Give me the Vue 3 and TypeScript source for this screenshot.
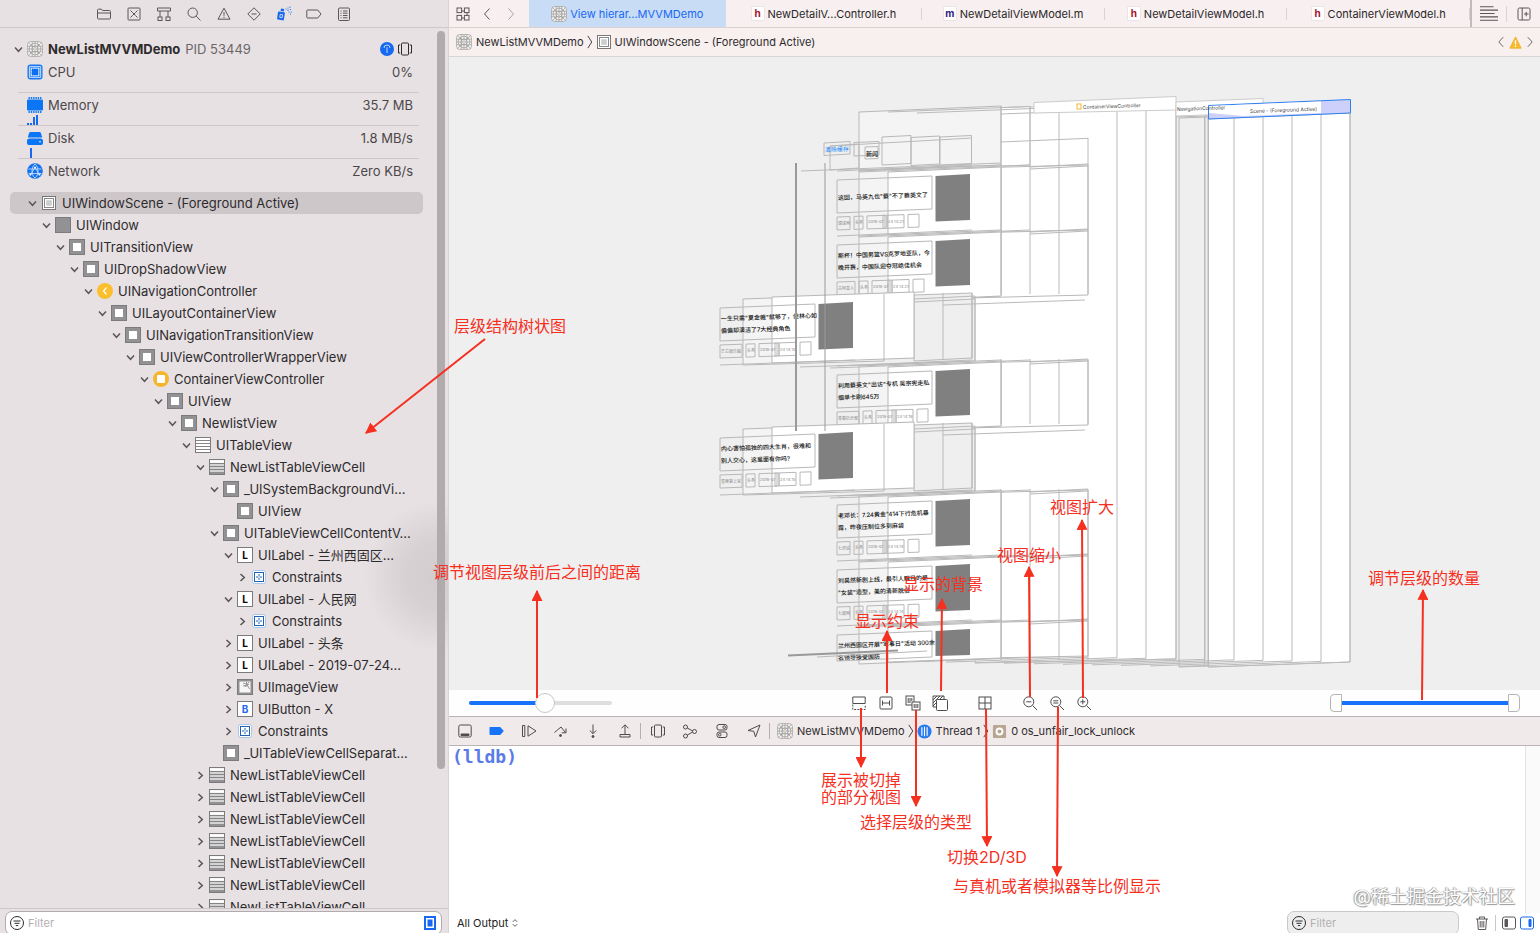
<script setup lang="ts">
import { computed, h, ref } from 'vue'

const icons: Record<string, string> = {
  folder: '<path d="M1.5 12V4.2c0-.6.4-1 1-1h3l1 1.3h7c.6 0 1 .4 1 1V12c0 .6-.4 1-1 1h-11c-.6 0-1-.4-1-1zM1.5 7h13"/>',
  boxx: '<rect x="2" y="2" width="12" height="12" rx=".8"/><path d="M4.5 4.5l2 2m3 3l2 2m0-7l-2 2m-3 3l-2 2M6.5 6.5l3 3m0-3l-3 3"/>',
  hierarchy: '<path d="M1.5 2h13v3h-13zM4 5v6m8-6v6"/><rect x="2" y="11" width="4" height="3.5"/><rect x="10" y="11" width="4" height="3.5"/>',
  search: '<circle cx="6.7" cy="6.7" r="4.7"/><path d="M10.2 10.2l4.3 4.3"/>',
  warning: '<path d="M8 2.2L14 13.2H2z" stroke-linejoin="round"/><path d="M8 6v3.8m0 1v1.2"/>',
  diamond: '<path d="M8 1.8L14.2 8 8 14.2 1.8 8z" stroke-linejoin="round"/><path d="M5.5 8h5"/>',
  spray: '<g fill="currentColor" stroke="none"><path d="M3.2 5.500l5.800 1-1.300 8-5.700-1c-.7-.1-1-.7-.9-1.300l.8-5.500c.1-.8.6-1.300 1.300-1.200z"/><path d="M5 2.500l3.200.500-.400 2.400-3.200-.500z"/><circle cx="10" cy="3" r=".6"/><circle cx="12" cy="2" r=".6"/><circle cx="14" cy="1.200" r=".6"/><circle cx="12" cy="4.200" r=".6"/><circle cx="14.500" cy="3.500" r=".6"/><circle cx="13" cy="6" r=".6"/><circle cx="15.300" cy="6" r=".6"/><circle cx="14.500" cy="8" r=".6"/></g><rect x="4" y="8.500" width="2.400" height="3" stroke="#e7e1e3" stroke-width=".8" transform="rotate(10 5 10)"/>',
  tag: '<path d="M1.500 4h10.300L15 8l-3.200 4H1.500c-.4 0-.7-.3-.7-.7V4.700c0-.4.3-.7.7-.7z" stroke-linejoin="round"/>',
  report: '<rect x="2.500" y="2" width="11" height="12.500" rx="1"/><path d="M4.500 5h1m1.500 0h4.500M4.500 7.200h1m1.500 0h4.500M4.500 9.500h1m1.500 0h4.500M4.500 11.800h1m1.500 0h4.500"/>',
  app: '<g stroke="#9b9a96" stroke-width=".7"><rect x=".6" y=".6" width="14.800" height="14.800" rx="3" fill="#f6f4f3"/><circle cx="8" cy="8" r="5.800"/><circle cx="8" cy="8" r="3"/><circle cx="8" cy="8" r="1.400"/><path d="M5.200.6v14.800M10.800.6v14.800M.6 5.200h14.800M.6 10.800h14.800M1.500 1.500l4 4m5 5l4 4M14.500 1.500l-4 4m-5 5l-4 4M8 .6v4.500m0 6v4.300M.6 8h4.500m6 0h4.300"/></g>',
  info: '<circle cx="8" cy="8" r="7" fill="#1769f0" stroke="none"/><path d="M5 7a3 3 0 0 1 6 0M8 6.200V12" stroke="#b9d5ff"/>',
  frames: '<rect x="4.500" y="2" width="7" height="12" rx="1"/><path d="M3.200 4H1.500v8h1.700m9.600-8h1.700v8h-1.700"/>',
  cpu: '<rect x="1.200" y="1.200" width="13.600" height="13.600" rx="2" stroke="#1579f5" stroke-width="1.400" fill="#d8e7fb"/><rect x="3.200" y="3.200" width="9.600" height="9.600" stroke="#1579f5" stroke-width=".8"/><rect x="5" y="5" width="6" height="6" fill="#0f6ff2" stroke="#0f6ff2" stroke-dasharray="1 .7"/>',
  memory: '<path d="M1.500 1h13M1.500 15h13" stroke="#1579f5" stroke-width="1.800" stroke-dasharray="1.400 .9"/><rect x="0" y="2.500" width="16" height="11" rx="1" fill="#0a76f5" stroke="none"/>',
  disk: '<path d="M3.500 2h9c.7 0 1.200.4 1.400 1L15.200 7.500H.8l1.300-4.500c.2-.6.7-1 1.400-1z" fill="#0a76f5" stroke="none"/><rect x="0" y="8.500" width="16" height="6.500" rx="2.600" fill="#0a76f5" stroke="none"/><circle cx="13" cy="11.800" r=".8" fill="#fff" stroke="none"/>',
  network: '<circle cx="8" cy="8" r="7.800" fill="#1372ee" stroke="none"/><g stroke="#cfe3ff" stroke-width=".8"><path d="M1.500 6h13M1.500 10.500h13M8 1C4 4 4 12 8 15M8 1c4 3 4 11 0 14M3 12.500l5-8 4.500 7.500"/></g><g fill="#fff" stroke="none"><circle cx="8" cy="4.500" r="1"/><circle cx="3.500" cy="11.500" r="1"/><circle cx="12.500" cy="11.500" r="1"/></g>',
  scene: '<rect x="1.500" y="1.500" width="13" height="13" fill="#fff" stroke="#777"/><rect x="3.500" y="3.500" width="9" height="9" fill="#fff" stroke="#888"/><rect x="5.200" y="5.200" width="5.600" height="5.600" fill="#ccc" stroke="none"/>',
  window: '<rect x=".5" y=".5" width="15" height="15" fill="#929193" stroke="#7b7a7c"/>',
  view: '<rect x=".5" y=".5" width="15" height="15" fill="#929193" stroke="#7b7a7c"/><rect x="4" y="4" width="8" height="8" fill="#fff" stroke="none"/>',
  nav: '<circle cx="8" cy="8" r="8" fill="#fcbf2c" stroke="none"/><path d="M9.500 4.500L6.500 8l3 3.500" stroke="#fff" stroke-width="1.200"/>',
  vc: '<circle cx="8" cy="8" r="8" fill="#f5b62c" stroke="none"/><rect x="4" y="4" width="8" height="8" rx="1" fill="#fff" stroke="none"/>',
  table: '<rect x=".5" y=".5" width="15" height="15" fill="#fff" stroke="#7b7a7c"/><path d="M1 3.500h14M1 6.500h14M1 9.500h14M1 12.500h14" stroke="#858486"/>',
  cell: '<rect x=".5" y=".5" width="15" height="15" fill="#d4d3d4" stroke="#7b7a7c"/><path d="M1 2.500h14" stroke="#fff" stroke-width="2.600"/><path d="M1 4.500h14M1 7.500h14M1 10.500h14" stroke="#858486"/><path d="M1 14h14" stroke="#929193" stroke-width="2"/>',
  constraints: '<rect x="1.500" y="1.500" width="13" height="13" rx="2" fill="#fff" stroke="#a9c6ea"/><rect x="3.500" y="3.500" width="9" height="9" stroke="#1f62b5"/><path d="M8 5v2m0 2v2M5 8h2m2 0h2M7.500 8h1" stroke="#1f62b5"/>',
  image: '<rect x=".5" y=".5" width="15" height="15" fill="#929193" stroke="#7b7a7c"/><rect x="2.500" y="2.500" width="11" height="11" fill="#f6f6f6" stroke="none"/><path d="M9.500 2.500v5M6 4l5 1.500M8 8l4-5M6 7l6-1.500M10 6l2.500 4" stroke="#999"/>',
  grid: '<rect x="2" y="2" width="4.600" height="4.600"/><rect x="9.400" y="2" width="4.600" height="4.600"/><rect x="2" y="9.400" width="4.600" height="4.600"/><rect x="9.400" y="9.400" width="4.600" height="4.600"/><path d="M6.600 5h2.800M12 6.600v2.800M6.600 12h2.800"/>',
  left: '<path d="M10.500 2.500L5.500 8l5 5.500"/>',
  right: '<path d="M5.500 2.500l5 5.500-5 5.500"/>',
  lines: '<path d="M0 1.500h12M0 4.500h16M0 7.500h13M0 10.500h16M0 13.500h16"/>',
  addpane: '<rect x="2" y="2" width="12" height="12" rx="1.500"/><path d="M6.200 2v12M8 8h4.500M10.200 5.800v4.500"/>',
  alert: '<path d="M8 2L14 14H2z" fill="#f7b92b" stroke="#f0b030" stroke-linejoin="round"/><path d="M8 5.500v4.500m0 1.300v1.400" stroke="#fff" stroke-width="1.400"/>',
  clipped: '<path d="M1.800 8.500V2h12.400v6.500z"/><path d="M1.800 9.500v5h12.400v-5" stroke-dasharray="2 1.200"/>',
  bounds: '<rect x="2" y="2" width="12" height="12" rx="1"/><path d="M4.500 5.500v5m7-5v5m-7-2.500h7"/>',
  modes: '<rect x="1" y="1" width="8" height="9"/><path d="M3.200 3v5m1.800-5v5m1.800-5v3"/><rect x="7" y="7" width="8" height="8" fill="#fff"/><path d="M9.200 9v4m1.800-4v4m1.800-4v4"/>',
  canvas: '<path d="M4.500 12H1V1h11v3.500M1 5l4-4M1 8l7-7M1 11L11 1"/><rect x="4.500" y="4.500" width="11" height="11" rx="1" fill="#fff"/>',
  quad: '<rect x="2" y="2" width="12" height="12"/><path d="M8 2v12M2 8h12"/>',
  zoomout: '<circle cx="6.800" cy="6.800" r="5"/><path d="M10.500 10.500L15 15M4.300 6.800h5"/>',
  zoomeq: '<circle cx="6.800" cy="6.800" r="5"/><path d="M10.500 10.500L15 15M4.300 5.800h5m-5 2.200h5"/>',
  zoomin: '<circle cx="6.800" cy="6.800" r="5"/><path d="M10.500 10.500L15 15M4.300 6.800h5M6.800 4.300v5"/>',
  hide: '<rect x="1.800" y="2" width="12.400" height="12" rx="1.500"/><path d="M4 11h8v1.500H4z" fill="currentColor"/>',
  breakpoint: '<path d="M1.500 4h9.700L14.800 8l-3.600 4H1.500c-.5 0-1-.4-1-1V5c0-.6.5-1 1-1z" fill="#1873fb" stroke="none"/>',
  resume: '<path d="M1.500 2.500h2.300v11H1.500zM7 2.800L15 8l-8 5.200z" stroke-linejoin="round"/>',
  over: '<path d="M1.500 9.500L8 4l4.500 5.500M13 5.500v4.300H8.700"/><circle cx="7.500" cy="12.500" r="1" fill="currentColor"/>',
  into: '<path d="M8 1.500v9M4.800 7.500L8 10.700l3.200-3.200"/><circle cx="8" cy="13.500" r="1" fill="currentColor"/>',
  out: '<path d="M8 11V2M4.500 5.300L8 1.800l3.500 3.500M3 11.500h10V14H3z"/>',
  graph: '<circle cx="3.500" cy="4" r="2"/><circle cx="12.500" cy="8.500" r="2"/><circle cx="3.500" cy="13" r="2"/><path d="M5.300 5L10.700 8M5.200 12.200L10.600 9"/>',
  toggles: '<rect x="3" y="1.500" width="10" height="5.500" rx="2"/><rect x="3" y="9" width="10" height="5.500" rx="2"/><circle cx="10.200" cy="4.200" r="1.300"/><circle cx="5.800" cy="11.700" r="1.300"/>',
  location: '<path d="M14 2L9.500 14 7.800 8.300 2 7.500z" stroke-linejoin="round"/>',
  crumb: '<path d="M5.500 1l4.500 7-4.500 7"/>',
  thread: '<circle cx="8" cy="8" r="7.500" fill="#2579f2" stroke="none"/><path d="M5.200 3.500v9M8 3v10m2.800-9.500v9" stroke="#fff" stroke-width="1.200"/>',
  frame: '<rect x="1" y="1" width="14" height="14" rx="1" fill="#b9a692" stroke="none"/><circle cx="8" cy="8" r="3.200" stroke="#fff" stroke-width="2"/>',
  filter: '<circle cx="8" cy="8" r="6.500"/><path d="M4.500 6h7M5.500 8.300h5M6.800 10.600h2.400"/>',
  updown: '<path d="M5 6.500L8 3.500l3 3M5 9.500l3 3 3-3"/>',
  trash: '<path d="M2 4h12M5.500 4V2h5v2M3.500 4l.8 10.500h7.400L12.500 4M6.200 6v6.500M8 6v6.500M9.800 6v6.500"/>',
  paneleft: '<rect x="1.500" y="2" width="13" height="12" rx="2"/><path d="M4 4.500h2.500v7H4z" fill="currentColor"/>',
  paneright: '<rect x="1.500" y="2" width="13" height="12" rx="2"/><path d="M10 4.500h2v7h-2z" fill="currentColor"/>',
  doc: '<rect x="3" y="2" width="10" height="12" fill="#fff" stroke="#1868f2" stroke-width="2"/><rect x="5.500" y="4.500" width="5" height="7" fill="#1868f2" stroke="none"/>',
}

const Icon = (p: { name: string; size?: number }) =>
  h('svg', {
    width: p.size ?? 16,
    height: p.size ?? 16,
    viewBox: '0 0 16 16',
    fill: 'none',
    stroke: 'currentColor',
    'stroke-width': 1,
    'aria-hidden': 'true',
    innerHTML: icons[p.name],
  })
Icon.props = ['name', 'size']

const navigators = ['folder', 'boxx', 'hierarchy', 'search', 'warning', 'diamond', 'spray', 'tag', 'report']
const gauges = [
  { name: 'CPU', icon: 'cpu', value: '0%', bars: [] as number[] },
  { name: 'Memory', icon: 'memory', value: '35.7 MB', bars: [2, 2, 8, 10] },
  { name: 'Disk', icon: 'disk', value: '1.8 MB/s', bars: [0, 10] },
  { name: 'Network', icon: 'network', value: 'Zero KB/s', bars: [] as number[] },
]

type Fold = 'open' | 'closed' | 'leaf'
type Node = [level: number, icon: string, text: string, fold: Fold]
const nodes: Node[] = [
  [0, 'scene', 'UIWindowScene - (Foreground Active)', 'open'],
  [1, 'window', 'UIWindow', 'open'],
  [2, 'view', 'UITransitionView', 'open'],
  [3, 'view', 'UIDropShadowView', 'open'],
  [4, 'nav', 'UINavigationController', 'open'],
  [5, 'view', 'UILayoutContainerView', 'open'],
  [6, 'view', 'UINavigationTransitionView', 'open'],
  [7, 'view', 'UIViewControllerWrapperView', 'open'],
  [8, 'vc', 'ContainerViewController', 'open'],
  [9, 'view', 'UIView', 'open'],
  [10, 'view', 'NewlistView', 'open'],
  [11, 'table', 'UITableView', 'open'],
  [12, 'cell', 'NewListTableViewCell', 'open'],
  [13, 'view', '_UISystemBackgroundVi...', 'open'],
  [14, 'view', 'UIView', 'leaf'],
  [13, 'view', 'UITableViewCellContentV...', 'open'],
  [14, 'L', 'UILabel - 兰州西固区...', 'open'],
  [15, 'constraints', 'Constraints', 'closed'],
  [14, 'L', 'UILabel - 人民网', 'open'],
  [15, 'constraints', 'Constraints', 'closed'],
  [14, 'L', 'UILabel - 头条', 'closed'],
  [14, 'L', 'UILabel - 2019-07-24...', 'closed'],
  [14, 'image', 'UIImageView', 'closed'],
  [14, 'B', 'UIButton - X', 'closed'],
  [14, 'constraints', 'Constraints', 'closed'],
  [13, 'view', '_UITableViewCellSeparat...', 'leaf'],
  ...Array.from({ length: 7 }, (): Node => [12, 'cell', 'NewListTableViewCell', 'closed']),
]
const selected = ref(0)

const tabs = [
  { kind: 'h', text: 'NewDetailV...Controller.h', wide: true },
  { kind: 'm', text: 'NewDetailViewModel.m', wide: false },
  { kind: 'h', text: 'NewDetailViewModel.h', wide: false },
  { kind: 'h', text: 'ContainerViewModel.h', wide: false },
]

/* Exploded layer geometry: each plane is 142 wide and steps 29 to the left. */
const rights = [1350, 1321, 1292, 1263, 1234, 1205, 1176, 1146, 1117, 1088, 1059, 1030, 1001]
const topAt = (r: number) => 106 + (r - 1001) * 0.02
const bottomAt = (r: number) => 662 - (1350 - r) * 0.0185
const columns = rights.filter((r) => r > 1100)
const frontColumns = [1088, 1059, 1030, 1001]

/* Frames of the source, section, date and close labels under a headline. */
const metaBoxes = (w: number) =>
  [[0, w], [w + 4, w + 13], [w + 17, w + 35], [w + 33, w + 37], [w + 37, w + 54], [w + 58, w + 69]]
    .map(([a, b]) => `M${a} ${46 - a * 0.035}L${b} ${46 - b * 0.035}V${59 - b * 0.035}L${a} ${59 - a * 0.035}z`)
    .join('')

const stories = [
  { w: 13, lines: ['这回，马英九也"蔡"不了蔡英文了'], meta: ['環球网', '头条', '2019-07', '24 14:21'] },
  { w: 18, lines: ['斯杯！中国男篮VS克罗地亚队，今', '晚开赛，中国队迎夺冠绝佳机会'], meta: ['古阿普人', '头条', '2019-07', '24 14:21'] },
  { w: 22, lines: ['一生只需"夏金薇"就够了，但林心如', '偏偏却演活了7大经典角色'], meta: ['芒芯娱乐圈', '头条', '2019-07', '24 14:15'] },
  { w: 22, lines: ['利用蔡英文"出访"专机 吴宗宪走私', '烟单卡刷645万'], meta: ['青春历史观', '头条', '2019-07', '24 14:19'] },
  { w: 22, lines: ['内心害怕孤独的四大生肖，很难和', '别人交心，这里面有你吗?'], meta: ['星座第上官', '头条', '2019-07', '24 14:15'] },
  { w: 13, lines: ['老邓长：7.24黄金"414下行危机暴', '露，昨夜压制位多到麻袋'], meta: ['七邓说', '头条', '2019-07', '24 14:14'] },
  { w: 13, lines: ['刘昊然新剧上线，最引人瞩目的是', '"女装"造型，美的清新脱俗'], meta: ['七娱网', '头条', '2019-07', '24 14:14'] },
  { w: 13, lines: ['兰州西固区开展"军事日"活动 300余', '名领导接受国防'], meta: [] as string[] },
].map((s, i) => {
  const shifted = i === 2 || i === 4
  return { ...s, shifted, last: i === 7, x: shifted ? 720 : 837, y: 171 + i * 65 - (shifted ? 2 : 0) }
})

const arrows = [
  [485, 339, 366, 433], [537, 698, 537, 591], [887, 693, 887, 631], [941, 691, 942, 599],
  [1030, 697, 1029, 567], [1083, 698, 1082, 520], [1422, 700, 1423, 590], [861, 708, 861, 767],
  [916, 710, 916, 806], [986, 709, 987, 846], [1058, 707, 1057, 876],
]
const notes: [number, number, string][] = [
  [454, 332, '层级结构树状图'], [433, 578, '调节视图层级前后之间的距离'], [855, 627, '显示约束'],
  [903, 590, '显示的背景'], [997, 561, '视图缩小'], [1050, 513, '视图扩大'], [1368, 584, '调节层级的数量'],
  [821, 786, '展示被切掉'], [821, 803, '的部分视图'], [860, 828, '选择层级的类型'],
  [947, 863, '切换2D/3D'], [953, 892, '与真机或者模拟器等比例显示'],
]

const spacing = ref(54)
const low = ref(0)
const high = ref(100)
const spacingFill = computed(() => ({ width: `${spacing.value}%` }))
const rangeFill = computed(() => ({ left: `${low.value}%`, right: `${100 - high.value}%` }))
const treeFilter = ref('')
const consoleFilter = ref('')
const output = ref('All Output')

const canvasTools = ['clipped', 'bounds', 'modes', 'canvas', 'quad', 'zoomout', 'zoomeq', 'zoomin']
const debugTools = ['hide', 'breakpoint', 'resume', 'over', 'into', 'out']
const debugExtras = ['frames', 'graph', 'toggles', 'location']
</script>

<template>
  <div class="workspace">
    <aside class="sidebar">
      <nav class="navigators" aria-label="Navigators">
        <button v-for="n in navigators" :key="n" :class="{ on: n === 'spray' }" :aria-label="n"><Icon :name="n" /></button>
      </nav>
      <div class="sidebar-body">
        <section class="gauges">
          <header class="process">
            <svg class="caret" viewBox="0 0 11 11"><path d="M2 3.500l3.500 3.800L9 3.500" /></svg>
            <Icon name="app" />
            <strong>NewListMVVMDemo</strong>
            <span>PID 53449</span>
            <button class="push" aria-label="Process info"><Icon name="info" /></button>
            <button aria-label="View hierarchy"><Icon name="frames" /></button>
          </header>
          <div v-for="g in gauges" :key="g.name" class="gauge">
            <div class="gauge-line">
              <Icon :name="g.icon" />
              <span>{{ g.name }}</span>
              <span class="value">{{ g.value }}</span>
            </div>
            <div class="spark"><i v-for="(b, i) in g.bars" :key="i" :style="{ height: b + 'px' }"></i></div>
          </div>
        </section>
        <ul class="tree" role="tree">
          <li
            v-for="(n, i) in nodes"
            :key="i"
            role="treeitem"
            :class="{ selected: selected === i }"
            :style="{ paddingLeft: 17 + n[0] * 14 + 'px' }"
            @click="selected = i"
          >
            <button class="fold" :class="n[3]" aria-label="Toggle">
              <svg class="caret" viewBox="0 0 11 11"><path d="M2 3.500l3.500 3.800L9 3.500" /></svg>
            </button>
            <span v-if="n[1] === 'L' || n[1] === 'B'" class="letter" :class="{ blue: n[1] === 'B' }">{{ n[1] }}</span>
            <Icon v-else :name="n[1]" />
            <span class="name">{{ n[2] }}</span>
          </li>
        </ul>
        <div class="scroller"></div>
      </div>
      <footer class="sidebar-filter">
        <label class="field">
          <Icon name="filter" />
          <input v-model="treeFilter" type="text" placeholder="Filter" aria-label="Filter hierarchy" />
          <Icon name="doc" />
        </label>
      </footer>
    </aside>

    <main class="editor">
      <div class="tabbar">
        <div class="history">
          <button aria-label="Related items"><Icon name="grid" /></button>
          <button aria-label="Back"><Icon name="left" /></button>
          <button class="dim" aria-label="Forward"><Icon name="right" /></button>
        </div>
        <button class="tab wide active"><Icon name="app" /><span>View hierar...MVVMDemo</span></button>
        <button v-for="t in tabs" :key="t.text" class="tab" :class="{ wide: t.wide }">
          <span class="file" :class="t.kind">{{ t.kind }}</span><span>{{ t.text }}</span>
        </button>
        <div class="tab-actions">
          <button aria-label="Editor options"><Icon name="lines" :size="18" /></button>
          <button class="split" aria-label="Add editor"><Icon name="addpane" /></button>
        </div>
      </div>

      <div class="pathbar">
        <Icon name="app" />
        <span>NewListMVVMDemo</span>
        <Icon name="crumb" :size="14" />
        <Icon name="scene" />
        <span>UIWindowScene - (Foreground Active)</span>
        <div class="issues">
          <button aria-label="Previous issue"><Icon name="left" :size="14" /></button>
          <Icon name="alert" :size="15" />
          <button aria-label="Next issue"><Icon name="right" :size="14" /></button>
        </div>
      </div>

      <section class="stage">
        <svg class="scene">
          <g transform="translate(-449 -57)">
            <g class="plane">
              <path d="M1208 119L1350 113V662L1208 667z" />
              <path class="grey" d="M1179 118L1208 117V666L1179 667z" />
              <path d="M975 109L1176 102V659L975 663z" />
              <path d="M888 112L1030 106.500V165L888 170z" />
              <path class="back" d="M859 112L1001 106V165L859 171z" />
            </g>
            <path class="edge" d="M917 113l142-5.500M888 112l142-5.500M1001 142l87-3.700M1001 114l145-5.500M1176 115l58-2M1176 117l58-2M1204.500 116v550M1208.500 106v560" />
            <path v-for="r in columns" :key="'c' + r" class="edge" :d="`M${r} ${topAt(r)}V${bottomAt(r)}`" />
            <path v-for="r in rights" :key="'b' + r" class="edge" :d="`M${r - 142} ${bottomAt(r) + 5}L${r} ${bottomAt(r)}`" />
            <path class="edge" d="M1001 106v59M1030 106v59M1059 107v58M1088 138v27" />

            <path class="label-plane" d="M1034 102.500L1176 96.500V110L1034 113z" />
            <path class="label-plane" d="M1176 102L1263 98.500V113L1176 116z" />
            <path class="blue-band" d="M1208.500 105.500L1350.500 99.500V113L1208.500 119z" />
            <path class="label-fill" d="M1209 106L1321 101.500V113L1244 116L1209 113z" />
            <rect class="badge" x="1077" y="104" width="4" height="5" />
            <g class="tiny">
              <text x="1083" y="109" transform="rotate(-2 1083 109)">ContainerViewController</text>
              <text x="1177" y="111" transform="rotate(-2 1177 111)">NavigationController</text>
              <text x="1250" y="113" transform="rotate(-2 1250 113)">Scene - (Foreground Active)</text>
            </g>

            <g v-for="(s, i) in stories" :key="i" :transform="`translate(${s.x} ${s.y})`">
              <template v-if="s.shifted">
                <path class="grey" d="M194 -4L252 -6V59L194 62z" />
                <path class="back" d="M23 0L164 -5V62L23 66z" />
                <path class="white" d="M52 -2L194 -7V59L52 64z" />
                <path class="edge" d="M223 -6v67M252 -6v66M255 -3v67M164 -5v66M194 0l61-3M194 3l61-3M223 6l142-5M0 66l135-5M80 68l175-6M110 69l175-6" />
              </template>
              <template v-else>
                <path class="white" :d="`M51 -1L251 -6V${s.last ? 30 : 59}L51 ${s.last ? 34 : 64}z`" />
                <path class="back" :d="`M22 0L164 -6V${s.last ? 32 : 60}L22 ${s.last ? 38 : 66}z`" />
                <path class="white" :d="`M51 1L164 -4V${s.last ? 32 : 60}L51 ${s.last ? 36 : 65}z`" />
                <path v-for="c in frontColumns" :key="c" class="edge" :d="`M${c - 837} -7V${s.last ? 34 : 58}`" />
                <path class="edge" d="M0 0l135-6M22 1l171-7M193 -4l58-3M193 -2l58-3" />
              </template>
              <path class="box" :d="`M0 9L95 5V${s.last ? 31 : 38}L0 ${s.last ? 35 : 42}z`" />
              <path class="photo" :d="`M98.500 5L133 3V${s.last ? 29 : 49}L98.500 ${s.last ? 30 : 50.500}z`" />
              <text
                v-for="(line, k) in s.lines"
                :key="k"
                class="headline"
                x="1"
                :y="(s.lines.length === 1 ? 29 : 22) + k * 12"
                :transform="`rotate(-2 1 ${(s.lines.length === 1 ? 29 : 22) + k * 12})`"
              >{{ line }}</text>
              <template v-if="s.meta.length">
                <path class="box" :d="metaBoxes(s.w)" />
                <g class="meta">
                  <text x="1" y="54">{{ s.meta[0] }}</text>
                  <text :x="s.w + 5" y="53">{{ s.meta[1] }}</text>
                  <text :x="s.w + 18" y="52">{{ s.meta[2] }}</text>
                  <text :x="s.w + 38" y="52">{{ s.meta[3] }}</text>
                </g>
              </template>
            </g>

            <path class="edge" d="M830 146l29-2v24l-29 2zM830 146l142-8M859 170l113-4" />
            <path class="box" d="M824 143l26-1.500v12.500l-26 1.500zM854 142.500l25-1v13.500l-25 1zM882 137l29-1.500v28l-29 1.500zM911 137.500l28.500-1.500v28l-28.500 1.500zM940 137l31.500-1.500v28L940 165zM865 147l13-.500v12l-13 .500z" />
            <text class="clear" x="825" y="152" transform="rotate(-2 825 152)">清除缓存</text>
            <text class="headline" x="866" y="156">新闻</text>
            <path class="rail" d="M796 163v268" />
            <path class="rail thin" d="M825 163v268" />
            <path class="edge" d="M801 171l200-8" />
            <path class="rail" d="M788 655.500l110-5" />
            <path class="edge" d="M817 657l110-6" />
          </g>
        </svg>
      </section>

      <div class="canvas-bar">
        <div class="slider">
          <div class="track"><div class="fill" :style="spacingFill"></div></div>
          <input v-model.number="spacing" type="range" min="0" max="100" aria-label="Layer spacing" />
        </div>
        <div class="tools">
          <button v-for="t in canvasTools" :key="t" :class="t" :aria-label="t"><Icon :name="t" /></button>
        </div>
        <div class="slider double">
          <div class="track"><div class="fill" :style="rangeFill"></div></div>
          <input v-model.number="low" type="range" min="0" max="100" aria-label="First visible layer" />
          <input v-model.number="high" class="upper" type="range" min="0" max="100" aria-label="Last visible layer" />
        </div>
      </div>

      <div class="debugbar">
        <div class="debug-group">
          <button v-for="t in debugTools" :key="t" :aria-label="t"><Icon :name="t" /></button>
        </div>
        <div class="debug-group ruled">
          <button v-for="t in debugExtras" :key="t" :aria-label="t"><Icon :name="t" /></button>
        </div>
        <div class="crumbs">
          <Icon name="app" />
          <span>NewListMVVMDemo</span>
          <Icon name="crumb" :size="14" />
          <Icon name="thread" :size="15" />
          <span>Thread 1</span>
          <Icon name="crumb" :size="14" />
          <Icon name="frame" :size="15" />
          <span>0 os_unfair_lock_unlock</span>
        </div>
      </div>

      <section class="console">
        <div class="log"><pre>(lldb)</pre></div>
        <div class="gutter"></div>
      </section>
      <footer class="console-bar">
        <label class="output">
          <select v-model="output" aria-label="Output"><option>All Output</option></select>
          <Icon name="updown" :size="12" />
        </label>
        <label class="field small">
          <Icon name="filter" />
          <input v-model="consoleFilter" type="text" placeholder="Filter" aria-label="Filter console" />
        </label>
        <button class="trash" aria-label="Clear console"><Icon name="trash" /></button>
        <div class="panes">
          <button aria-label="Variables view"><Icon name="paneleft" /></button>
          <button class="on" aria-label="Console view"><Icon name="paneright" /></button>
        </div>
      </footer>
    </main>

    <div class="watermark">@稀土掘金技术社区</div>
    <svg class="notes">
      <defs>
        <marker id="head" viewBox="0 0 10 10" refX="9" refY="5" markerWidth="11" markerHeight="11" markerUnits="userSpaceOnUse" orient="auto">
          <path d="M0 0L10 5L0 10z" />
        </marker>
      </defs>
      <line v-for="(a, i) in arrows" :key="i" :x1="a[0]" :y1="a[1]" :x2="a[2]" :y2="a[3]" marker-end="url(#head)" />
      <text v-for="n in notes" :key="n[2]" :x="n[0]" :y="n[1]">{{ n[2] }}</text>
    </svg>
  </div>
</template>

<style>
body {
  margin: 0;
  overflow: hidden;
}
</style>

<style scoped>
.workspace {
  position: relative;
  display: flex;
  height: 100vh;
  overflow: hidden;
  font-family: Inter, "Noto Sans CJK SC", sans-serif;
  font-size: 13px;
  color: #2e2b2d;
  background: #fff;
}
button {
  display: inline-flex;
  align-items: center;
  justify-content: center;
  padding: 0;
  border: 0;
  background: none;
  color: #5b5658;
  font: inherit;
}
svg {
  flex: none;
  display: block;
}
.sidebar {
  flex: 0 0 448px;
  display: flex;
  flex-direction: column;
  min-height: 0;
  border-right: 1px solid #d9d3d5;
  background: #e7e1e3;
}
.navigators {
  display: flex;
  flex: 0 0 27px;
  justify-content: center;
  gap: 14px;
  border-bottom: 1px solid #cdc7c9;
}
.navigators .on {
  color: #1769f0;
}
.sidebar-body {
  position: relative;
  flex: 1 1 0;
  min-height: 0;
  overflow: hidden;
  padding: 10px 25px 0 10px;
  background: radial-gradient(circle at 440px 548px, rgba(70, 66, 68, 0.13), rgba(70, 66, 68, 0.1) 35px, rgba(70, 66, 68, 0) 76px);
}
.scroller {
  position: absolute;
  top: 3px;
  right: 3px;
  bottom: 139px;
  width: 8px;
  border-radius: 4px;
  background: #b1abad;
}
.gauges {
  padding: 0 4px 0 8px;
}
.caret {
  width: 11px;
  height: 11px;
  fill: none;
  stroke: #5b5658;
  stroke-width: 1.500;
}
.process {
  display: flex;
  align-items: center;
  height: 22px;
  margin-left: -5px;
  gap: 5px;
  padding-right: 6px;
}
.process .caret {
  margin-right: -2px;
}
.process span {
  color: #6b6668;
}
.process button {
  color: #2e2b2d;
}
.process .push {
  margin-left: auto;
  margin-right: -3px;
}
.gauge {
  height: 32px;
  border-bottom: 1px solid #cdc7c9;
}
.gauge:last-child {
  border-bottom-color: transparent;
}
.gauge-line {
  display: flex;
  align-items: center;
  height: 23px;
  gap: 5px;
  padding: 0 6px 0 9px;
  color: #4c484a;
}
.value {
  margin-left: auto;
}
.spark {
  display: flex;
  align-items: flex-end;
  gap: 1px;
  height: 9px;
  padding-left: 9px;
}
.spark i {
  width: 2px;
  background: #1868f2;
}
.tree {
  margin: 0;
  padding: 0;
  list-style: none;
}
.tree li {
  display: flex;
  align-items: center;
  height: 22px;
  gap: 5px;
  border-radius: 5px;
  line-height: 16px;
  white-space: nowrap;
}
.name {
  height: 16px;
}
.tree .selected {
  background: #cdc7c9;
}
.fold {
  width: 11px;
  margin-right: -2px;
}
.fold.closed .caret {
  transform: rotate(-90deg);
}
.fold.leaf {
  visibility: hidden;
}
.letter {
  box-sizing: border-box;
  width: 16px;
  height: 16px;
  border: 1px solid #7b7a7c;
  background: #fff;
  color: #000;
  font-size: 10px;
  font-weight: 700;
  line-height: 14px;
  text-align: center;
}
.letter.blue {
  color: #2469f0;
}
.sidebar-filter {
  display: flex;
  flex: 0 0 24px;
  align-items: flex-start;
  min-height: 0;
  padding: 0 6px 0 5px;
  border-top: 1px solid #cdc7c9;
}
.field {
  box-sizing: border-box;
  display: flex;
  flex: 1;
  align-items: center;
  min-width: 0;
  height: 24px;
  margin-top: 2px;
  padding: 0 3px;
  gap: 3px;
  border: 1px solid #b1abad;
  border-radius: 7px;
  background: #fff;
  font-size: 11px;
}
.field input {
  flex: 1;
  min-width: 0;
  padding: 0;
  border: 0;
  outline: 0;
  background: none;
  font: inherit;
}
.field input::placeholder {
  color: #b3b0b1;
  opacity: 1;
}
.editor {
  display: flex;
  flex: 1 1 0;
  flex-direction: column;
  min-width: 0;
}
.tabbar {
  display: flex;
  flex: 0 0 27px;
  border-bottom: 1px solid #d9d2d3;
  background: #f8eff0;
  font-size: 11px;
}
.history {
  display: flex;
  flex: 0 0 80px;
  align-items: center;
  gap: 8px;
  box-sizing: border-box;
  padding-left: 6px;
}
.dim {
  opacity: 0.5;
}
.tab {
  position: relative;
  flex: 182 1 0;
  gap: 4px;
  min-width: 0;
  color: #2a2728;
  white-space: nowrap;
}
.tab.wide {
  flex-grow: 196;
}
.tab.active {
  gap: 3px;
  background: #c8dcf6;
  color: #1768f2;
}
.tab:not(.active)::after {
  content: "";
  position: absolute;
  top: 8px;
  right: 0;
  width: 1px;
  height: 12px;
  background: #dcd3d5;
}
.file {
  width: 12px;
  height: 13px;
  background: #fff;
  box-shadow: 0 0 1px #aaa;
  color: #a5112a;
  font-size: 10px;
  font-weight: 700;
  line-height: 13px;
}
.file.m {
  color: #2e2080;
}
.tab-actions {
  display: flex;
  align-items: center;
  justify-content: space-between;
  flex: 0 0 70px;
  box-sizing: border-box;
  padding: 0 8px;
  border-left: 2px solid #c2bbbc;
}
.split {
  padding-left: 9px;
  border-left: 1px solid #dcd3d5;
}
.pathbar {
  display: flex;
  flex: 0 0 28px;
  align-items: center;
  gap: 4px;
  padding: 0 3px 0 7px;
  border-bottom: 1px solid #d9d4d5;
  background: #f8efef;
  font-size: 11px;
}
.pathbar > svg:nth-of-type(2),
.crumbs > svg:nth-of-type(2),
.crumbs > svg:nth-of-type(4) {
  margin: 0 -5px;
}
.pathbar > svg:nth-of-type(3) {
  margin-right: -1px;
}
.issues {
  display: flex;
  align-items: center;
  margin-left: auto;
}
.stage {
  position: relative;
  flex: 1 1 0;
  min-height: 0;
  overflow: hidden;
  background: #efefef;
}
.scene {
  position: absolute;
  inset: 0;
  width: 100%;
  height: 100%;
}
.plane path {
  fill: #fff;
  stroke: #c0c0c0;
}
.plane .grey,
.grey {
  fill: #efefef;
  stroke: #b8b8b8;
}
.white {
  fill: #fff;
  stroke: #b8b8b8;
}
.plane .back,
.back {
  fill: #f4f4f4;
  stroke: #b8b8b8;
}
.edge {
  fill: none;
  stroke: #bababa;
}
.label-plane,
.label-fill {
  fill: #fff;
  stroke: #ccc;
}
.label-fill {
  stroke: none;
}
.blue-band {
  fill: #ccd0fb;
  stroke: #2c80ee;
}
.badge {
  fill: none;
  stroke: #f5b62c;
}
.tiny {
  fill: #444;
  font-size: 5px;
}
.box {
  fill: none;
  stroke: #b8b8b8;
}
.photo {
  fill: #808080;
}
.headline {
  fill: #111;
  font-size: 6px;
  font-weight: 500;
}
.meta {
  fill: #888;
  font-size: 4px;
}
.clear {
  fill: #1687f5;
  font-size: 6px;
}
.rail {
  fill: none;
  stroke: #999;
  stroke-width: 2;
}
.rail.thin {
  stroke-width: 1;
}
.canvas-bar {
  display: flex;
  flex: 0 0 27px;
  align-items: center;
  justify-content: space-between;
  box-sizing: border-box;
  padding: 0 20px;
  border-bottom: 1px solid #b9b3b5;
  background: #fefefe;
}
.slider {
  position: relative;
  display: flex;
  align-items: center;
  width: 143px;
  height: 22px;
}
.slider.double {
  width: 190px;
}
.track {
  position: relative;
  flex: 1;
  height: 4px;
  border-radius: 2px;
  background: #dedede;
}
.double .track {
  margin: 0 10px;
}
.fill {
  height: 4px;
  border-radius: 2px;
  background: #1873fb;
}
.double .fill {
  position: absolute;
}
.slider input {
  position: absolute;
  inset: 0;
  width: 100%;
  margin: 0;
  appearance: none;
  background: none;
  pointer-events: none;
}
.slider input::-webkit-slider-thumb {
  appearance: none;
  box-sizing: border-box;
  width: 20px;
  height: 20px;
  border: 1px solid #c6c6c6;
  border-radius: 50%;
  background: #fff;
  pointer-events: auto;
}
.double input::-webkit-slider-thumb {
  width: 12px;
  height: 18px;
  border-color: #b5b5b5;
  border-radius: 4px 0 0 4px;
}
.double .upper::-webkit-slider-thumb {
  border-radius: 0 4px 4px 0;
}
.tools {
  display: flex;
  gap: 11px;
}
.tools .quad,
.tools .zoomout {
  margin-left: 18px;
}
.tools button,
.debugbar button {
  color: #4f4c4d;
}
.debugbar {
  display: flex;
  flex: 0 0 28px;
  align-items: center;
  border-bottom: 1px solid #b9b3b5;
  background: #f0eaeb;
  font-size: 11px;
}
.debug-group {
  display: flex;
  gap: 16px;
  padding: 0 7px 0 8px;
}
.ruled {
  padding-left: 9px;
  border: 1px solid #b5afb1;
  border-width: 0 1px;
}
.crumbs {
  display: flex;
  align-items: center;
  gap: 4px;
  padding-left: 7px;
}
.console {
  display: flex;
  flex: 0 0 167px;
}
.log {
  flex: 1;
  padding-left: 3px;
}
pre {
  margin: 0;
  color: #5b7be8;
  font: bold 18px/22px "DejaVu Sans Mono", monospace;
}
.gutter {
  flex: 0 0 14px;
  border-left: 1px solid #e4e4e4;
  background: #fafafa;
}
.console-bar {
  display: flex;
  flex: 0 0 20px;
  align-items: center;
  min-height: 0;
  height: 20px;
  padding: 0 5px 0 8px;
  font-size: 11px;
}
.output {
  display: flex;
  align-items: center;
  margin-right: auto;
}
select {
  padding: 0;
  border: 0;
  appearance: none;
  background: none;
  color: #222;
  font: inherit;
}
.field.small {
  flex: 0 0 172px;
  margin-top: 0;
  border-color: #c9c9c9;
  background: #eee;
}
.trash {
  margin: 0 5px 0 15px;
}
.panes {
  display: flex;
  gap: 2px;
  padding-left: 5px;
  border-left: 1px solid #c9c9c9;
}
.panes .on {
  color: #1868f2;
}
.watermark {
  position: absolute;
  right: 25px;
  bottom: 22px;
  color: #fff;
  font-size: 18px;
  line-height: 28px;
  text-shadow: 0 0 1px #888, 1px 1px 1px #999, -1px 0 1px #aaa;
}
.notes {
  position: absolute;
  inset: 0;
  width: 100%;
  height: 100%;
  pointer-events: none;
}
.notes line {
  stroke: #f5301f;
  stroke-width: 2;
}
.notes path,
.notes text {
  fill: #f5301f;
}
.notes text {
  font-size: 16px;
}
</style>
